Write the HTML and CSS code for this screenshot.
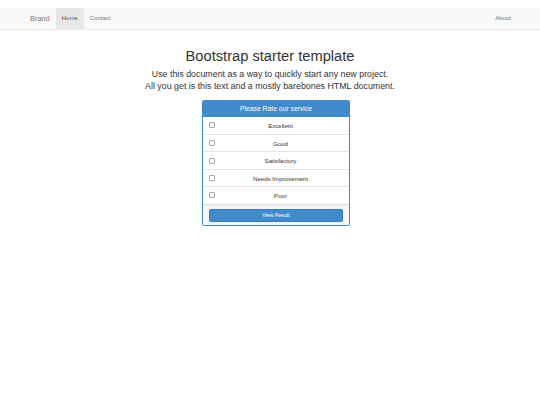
FILE: index.html
```html
<!DOCTYPE html>
<html>
<head>
<meta charset="utf-8">
<link rel="stylesheet" href="styles.css">
</head>
<body>
<nav class="navbar">
  <div class="nav-left">
    <span class="brand">Brand</span>
    <span class="nav-link active">Home</span>
    <span class="nav-link">Contact</span>
  </div>
  <div class="nav-right">
    <span class="nav-link">About</span>
  </div>
</nav>
<main class="starter">
  <h1 class="title">Bootstrap starter template</h1>
  <p class="lead">Use this document as a way to quickly start any new project.<br>All you get is this text and a mostly barebones HTML document.</p>
  <div class="panel-wrap">
    <div class="panel">
      <div class="panel-heading">Please Rate our service</div>
      <ul class="options">
        <li class="option"><span class="check"></span><span class="label">Excellent</span></li>
        <li class="option"><span class="check"></span><span class="label">Good</span></li>
        <li class="option"><span class="check"></span><span class="label">Satisfactory</span></li>
        <li class="option"><span class="check"></span><span class="label">Needs Improvement</span></li>
        <li class="option"><span class="check"></span><span class="label">Poor</span></li>
      </ul>
      <div class="panel-footer"><div class="btn">View Result</div></div>
    </div>
  </div>
</main>
</body>
</html>
```
FILE: styles.css
```css
* { box-sizing: border-box; }
html, body { margin: 0; padding: 0; background: #fff; }
body {
  font-family: "Liberation Sans", Arial, sans-serif;
  color: #333;
}
.navbar {
  margin-top: 8px;
  height: 22px;
  background: #f8f8f8;
  border-bottom: 1px solid #e7e7e7;
  display: flex;
  justify-content: space-between;
  padding: 0 23px 0 24px;
}
.nav-left, .nav-right { display: flex; align-items: stretch; }
.brand {
  padding: 0 6px;
  font-size: 7.4px;
  line-height: 21px;
  color: #777;
}
.nav-link {
  padding: 0 6px;
  font-size: 6px;
  line-height: 21px;
  color: #777;
}
.nav-link.active { background: #e7e7e7; color: #555; }
.starter { text-align: center; }
.title {
  margin: 18px 0 0;
  font-size: 14.7px;
  line-height: 1.1;
  font-weight: 400;
  color: #333;
}
.lead {
  margin: 5px 0 0;
  font-size: 8.85px;
  line-height: 1.33;
}
.panel-wrap {
  width: 160px;
  margin: 7px auto 0;
  padding-left: 12px;
}
.panel {
  border: 1px solid #428bca;
  border-radius: 2px;
  background: #fff;
  box-shadow: 0 1px 1px rgba(0,0,0,0.05);
  overflow: hidden;
}
.panel-heading {
  background: #428bca;
  color: #fff;
  font-size: 6.8px;
  line-height: 16px;
  text-align: center;
}
.options { list-style: none; margin: 0; padding: 0; }
.option {
  display: flex;
  align-items: center;
  height: 17.4px;
  padding: 0 6px;
  border-top: 1px solid #e6e6e6;
  font-size: 6.1px;
  color: #333;
}
.option:first-child { border-top: none; }
.check {
  flex: none;
  width: 6px;
  height: 6px;
  border: 1px solid #aaa;
  border-radius: 1px;
  background: #fff;
}
.label { flex: 1; text-align: center; margin-left: 3px; }
.panel-footer {
  background: #f5f5f5;
  border-top: 1px solid #ddd;
  padding: 4px 6px 3px;
}
.btn {
  background: #428bca;
  border: 1px solid #357ebd;
  border-radius: 1.5px;
  color: #fff;
  font-size: 5.2px;
  line-height: 11px;
  text-align: center;
}
```
